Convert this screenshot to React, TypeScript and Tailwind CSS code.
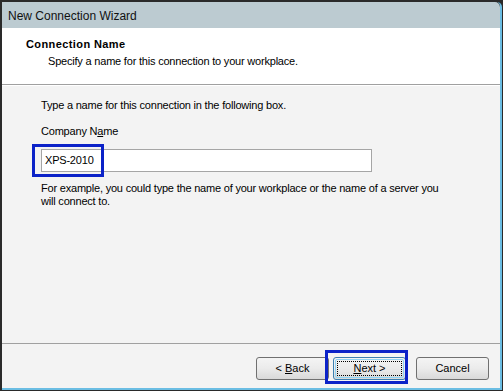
import React from "react";

const font = { fontFamily: '"Liberation Sans", Arial, sans-serif' };

function Btn({ children, def }: { children: React.ReactNode; def?: boolean }) {
  return (
    <div
      className={`relative w-[73px] h-[23px] rounded-[3px] border ${def ? "border-[#3c7fb1]" : "border-[#707070]"} bg-gradient-to-b from-[#f4f4f4] via-[#ebebeb] to-[#d9d9d9] flex items-center justify-center text-[11px] text-black`}
    >
      {def && (
        <div className="absolute inset-[1px] rounded-[2px] border border-[#8fd4f5]" />
      )}
      {def && (
        <div className="absolute left-[3px] right-[3px] top-[3px] bottom-[3px] border border-dotted border-black" />
      )}
      <span className="relative">{children}</span>
    </div>
  );
}

export default function App() {
  return (
    <div style={font} className="w-[503px] h-[391px] bg-[#2a2a2a] pt-[2px] pl-[2px] pr-[1px] pb-[1px]">
      <div className="w-full h-full flex flex-col border-r-2 border-b-2 border-[#6bbde3] rounded-tr-[5px] overflow-hidden">
        <div className="h-[26px] bg-[#bccbd1] flex items-center pl-[6px] pt-[1px] text-[12px] text-[#111] shrink-0 rounded-tr-[5px]">
          New Connection Wizard
        </div>
        <div className="h-[57px] bg-white shrink-0 pt-[10px] pl-[24px] border-b border-[#a0a0a0]">
          <div className="text-[11px] leading-[13px] font-bold tracking-[0.4px] text-black">Connection Name</div>
          <div className="text-[11px] leading-[13px] tracking-[-0.2px] text-black pl-[22px] mt-[4px]">
            Specify a name for this connection to your workplace.
          </div>
        </div>
        <div className="flex-1 bg-[#f3f3f3] border-t border-white pl-[39px] pt-[13px] text-[11px] leading-[13px] tracking-[-0.2px] text-black">
          <div>Type a name for this connection in the following box.</div>
          <div className="mt-[13px]">
            Company N<span className="underline">a</span>me
          </div>
          <div className="relative mt-[11px] w-[331px] h-[23px] bg-white border border-[#a5a5a5] flex items-center pl-[3px]">
            XPS-2010
            <div className="absolute left-[-10px] top-[-6px] w-[72px] h-[33px] border-[3px] border-[#0b22c8]" />
          </div>
          <div className="mt-[10px] whitespace-nowrap">
            For example, you could type the name of your workplace or the name of a server you
            <br />
            will connect to.
          </div>
        </div>
        <div className="h-[45px] shrink-0 bg-[#f3f3f3] border-t border-[#a0a0a0] flex items-start justify-end pt-[13px] pr-[11px]">
          <Btn>
            &lt; <span className="underline">B</span>ack
          </Btn>
          <div className="relative ml-[4px]">
            <Btn def>
              <span className="underline">N</span>ext &gt;
            </Btn>
            <div className="absolute left-[-8px] top-[-7px] w-[83px] h-[34px] border-[3px] border-[#0b22c8]" />
          </div>
          <div className="ml-[10px]">
            <Btn>Cancel</Btn>
          </div>
        </div>
      </div>
    </div>
  );
}
